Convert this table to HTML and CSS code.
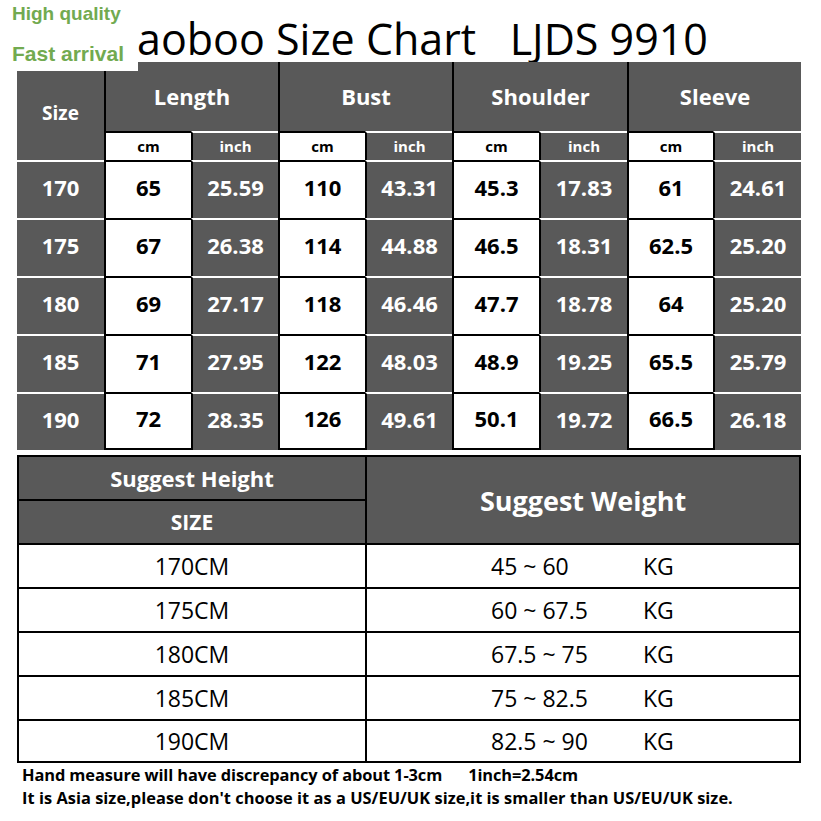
FILE: index.html
```html
<!DOCTYPE html>
<html>
<head>
<meta charset="utf-8">
<link rel="stylesheet" href="styles.css">
</head>
<body>
<div class="page">
  <div class="title">aoboo Size Chart   LJDS 9910</div>

  <div class="chart">
    <div class="c dk size-h">Size</div>
    <div class="c dk grp g1">Length</div>
    <div class="c dk grp g2">Bust</div>
    <div class="c dk grp g3">Shoulder</div>
    <div class="c dk grp g4">Sleeve</div>

    <div class="c wt sub">cm</div><div class="c dk sub">inch</div>
    <div class="c wt sub">cm</div><div class="c dk sub">inch</div>
    <div class="c wt sub">cm</div><div class="c dk sub">inch</div>
    <div class="c wt sub">cm</div><div class="c dk sub">inch</div>

    <div class="c dk first">170</div><div class="c wt">65</div><div class="c dk">25.59</div><div class="c wt">110</div><div class="c dk">43.31</div><div class="c wt">45.3</div><div class="c dk">17.83</div><div class="c wt">61</div><div class="c dk">24.61</div>
    <div class="c dk first">175</div><div class="c wt">67</div><div class="c dk">26.38</div><div class="c wt">114</div><div class="c dk">44.88</div><div class="c wt">46.5</div><div class="c dk">18.31</div><div class="c wt">62.5</div><div class="c dk">25.20</div>
    <div class="c dk first">180</div><div class="c wt">69</div><div class="c dk">27.17</div><div class="c wt">118</div><div class="c dk">46.46</div><div class="c wt">47.7</div><div class="c dk">18.78</div><div class="c wt">64</div><div class="c dk">25.20</div>
    <div class="c dk first">185</div><div class="c wt">71</div><div class="c dk">27.95</div><div class="c wt">122</div><div class="c dk">48.03</div><div class="c wt">48.9</div><div class="c dk">19.25</div><div class="c wt">65.5</div><div class="c dk">25.79</div>
    <div class="c dk first">190</div><div class="c wt last">72</div><div class="c dk">28.35</div><div class="c wt last">126</div><div class="c dk">49.61</div><div class="c wt last">50.1</div><div class="c dk">19.72</div><div class="c wt last">66.5</div><div class="c dk">26.18</div>
  </div>

  <div class="weights">
    <div class="w hd h1">Suggest Height</div>
    <div class="w hd wtitle">Suggest Weight</div>
    <div class="w hd h2">SIZE</div>

    <div class="w ht">170CM</div><div class="w kg"><span class="val">45 ~ 60</span><span>KG</span></div>
    <div class="w ht">175CM</div><div class="w kg"><span class="val">60 ~ 67.5</span><span>KG</span></div>
    <div class="w ht">180CM</div><div class="w kg"><span class="val">67.5 ~ 75</span><span>KG</span></div>
    <div class="w ht">185CM</div><div class="w kg"><span class="val">75 ~ 82.5</span><span>KG</span></div>
    <div class="w ht">190CM</div><div class="w kg"><span class="val">82.5 ~ 90</span><span>KG</span></div>
  </div>

  <div class="notes">
    <div class="note">Hand measure will have discrepancy of about 1-3cm<span class="conv">1inch=2.54cm</span></div>
    <div class="note wide">It is Asia size,please don't choose it as a US/EU/UK size,it is smaller than US/EU/UK size.</div>
  </div>

  <div class="badge">
    <div class="b1">High quality</div>
    <div class="b2">Fast arrival</div>
  </div>
</div>
</body>
</html>
```

FILE: styles.css
```css
html, body {
  margin: 0;
  padding: 0;
  background: #fff;
}
.page {
  position: relative;
  width: 821px;
  height: 821px;
  overflow: hidden;
  font-family: "Open Sans", "Noto Sans", sans-serif;
  color: #000;
}
.title {
  height: 62px;
  box-sizing: border-box;
  padding-left: 137px;
  padding-bottom: 2px;
  display: flex;
  align-items: flex-end;
  font-size: 43px;
  line-height: 1;
  white-space: pre;
  color: #000;
}
.chart {
  margin-left: 17px;
  width: 784px;
  display: grid;
  grid-template-columns: 87px 87px 87px 87px 87px 87px 88px 86px 88px;
  grid-template-rows: 69px 29px repeat(5, 58px);
}
.c {
  box-sizing: border-box;
  display: flex;
  align-items: center;
  justify-content: center;
  font-weight: 700;
  font-size: 22px;
  padding-bottom: 6px;
  border-left: 2px solid #000;
  border-top: 2px solid #fff;
}
.c.dk {
  background: #595959;
  color: #fff;
}
.c.wt {
  background: #fff;
  color: #000;
  border-top-color: #000;
}
.c.last {
  border-bottom: 2px solid #000;
}
.c.first, .size-h {
  border-left: none;
}
.size-h {
  grid-row: 1 / 3;
  grid-column: 1;
  font-size: 19px;
  border-top: none;
  padding-top: 4px;
  padding-bottom: 0;
}
.grp {
  border-top: none;
  font-size: 22px;
  padding-bottom: 2px;
}
.g1 { grid-column: 2 / 4; }
.g2 { grid-column: 4 / 6; }
.g3 { grid-column: 6 / 8; }
.g4 { grid-column: 8 / 10; }
.c.sub {
  font-size: 15px;
  padding-bottom: 1px;
}
.weights {
  margin-top: 5px;
  margin-left: 17px;
  width: 784px;
  box-sizing: border-box;
  border: 2px solid #000;
  display: grid;
  grid-template-columns: 346px 1fr;
  grid-template-rows: 42px 44px 44px 44px 44px 44px 42px;
}
.w {
  box-sizing: border-box;
  display: flex;
  align-items: center;
  justify-content: center;
  font-size: 23px;
  border-top: 2px solid #000;
}
.w.hd {
  background: #595959;
  color: #fff;
  font-weight: 700;
}
.h1 {
  grid-row: 1;
  grid-column: 1;
  border-top: none;
  font-size: 22px;
}
.h2 {
  grid-row: 2;
  grid-column: 1;
  font-size: 21px;
}
.wtitle {
  grid-row: 1 / 3;
  grid-column: 2;
  border-top: none;
  border-left: 2px solid #000;
  font-size: 27px;
}
.kg {
  border-left: 2px solid #000;
  justify-content: flex-start;
  padding-left: 124px;
}
.kg .val {
  width: 152px;
}
.notes {
  padding-left: 22px;
}
.note {
  font-size: 16.4px;
  font-weight: 700;
  line-height: 23px;
  white-space: pre;
  letter-spacing: -0.1px;
}
.note.wide {
  letter-spacing: 0.03px;
}
.conv {
  margin-left: 26px;
}
.badge {
  position: absolute;
  left: 0;
  top: 0;
  width: 138px;
  height: 71px;
  background: #fff;
  font-family: "Liberation Sans", Arial, sans-serif;
  font-weight: 700;
  color: #72aa50;
}
.b1 {
  position: absolute;
  left: 12px;
  top: 3px;
  font-size: 19px;
}
.b2 {
  position: absolute;
  left: 12px;
  top: 42px;
  font-size: 21px;
}
```
